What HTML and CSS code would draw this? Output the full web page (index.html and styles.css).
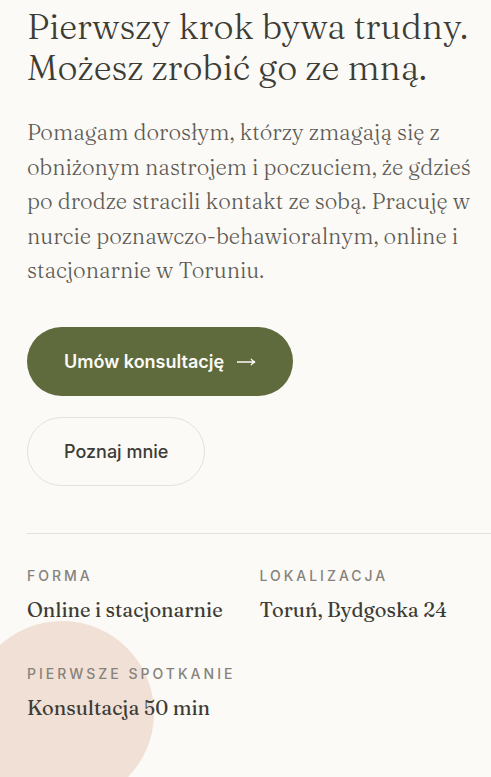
FILE: index.html
```html
<!DOCTYPE html>
<html lang="pl">
<head>
  <meta charset="UTF-8">
  <meta name="viewport" content="width=device-width, initial-scale=1.0">
  <title>Pierwszy krok</title>
  <link rel="stylesheet" href="styles.css">
</head>
<body>
  <main class="hero">
    <h1>Pierwszy krok bywa trudny. Możesz zrobić go ze mną.</h1>
    <p class="lead">Pomagam dorosłym, którzy zmagają się z obniżonym nastrojem i poczuciem, że gdzieś po drodze stracili kontakt ze sobą. Pracuję w nurcie poznawczo-behawioralnym, online i stacjonarnie w Toruniu.</p>
    <div class="actions">
      <a class="btn btn-primary" href="#kontakt">Umów konsultację
        <svg class="arrow" viewBox="0 0 20 12" aria-hidden="true"><path d="M1 7H19M15 3.800C15.800 5.300 17 6.500 19 7C17 7.500 15.800 8.700 15 10.200"/></svg>
      </a>
      <a class="btn btn-outline" href="#o-mnie">Poznaj mnie</a>
    </div>
    <dl class="facts">
      <div class="fact">
        <dt>Forma</dt>
        <dd>Online i stacjonarnie</dd>
      </div>
      <div class="fact">
        <dt>Lokalizacja</dt>
        <dd>Toruń, Bydgoska 24</dd>
      </div>
      <div class="fact">
        <dt>Pierwsze spotkanie</dt>
        <dd>Konsultacja 50 min</dd>
      </div>
    </dl>
  </main>
</body>
</html>
```
FILE: styles.css
```css
:root {
  --bg: #fbfaf7;
  --ink: #3d3c35;
  --muted: #5e5c56;
  --label: #85827b;
  --line: #e2e2dc;
  --olive: #5f6b3c;
  --peach: #f1e0d5;
  --serif: Fraunces, "Liberation Serif", serif;
  --sans: Inter, sans-serif;
}

* {
  box-sizing: border-box;
}

body {
  margin: 0;
  min-height: 100vh;
  background: var(--bg);
  color: var(--ink);
  font-family: var(--sans);
  overflow-x: hidden;
}

.hero {
  position: relative;
  min-height: 100vh;
  padding: 6px 0 48px 27px;
  overflow: hidden;
}

/* soft circle behind the facts */
.hero::before {
  content: "";
  position: absolute;
  left: -30px;
  bottom: -28px;
  width: 184px;
  height: 184px;
  border-radius: 50%;
  background: var(--peach);
  z-index: -1;
}

h1 {
  margin: 0;
  max-width: 460px;
  font-family: var(--serif);
  font-size: 35px;
  font-weight: 300;
  line-height: 41px;
}

.lead {
  margin: 27px 0 0;
  max-width: 450px;
  color: var(--muted);
  font-family: var(--serif);
  font-size: 22px;
  font-weight: 300;
  line-height: 1.57;
}

.actions {
  display: flex;
  flex-direction: column;
  align-items: flex-start;
  gap: 21px;
  margin-top: 39px;
}

.btn {
  display: inline-flex;
  align-items: center;
  gap: 12px;
  padding: 22px 36px;
  border: 1px solid transparent;
  border-radius: 40px;
  font-size: 18px;
  line-height: 23px;
  text-decoration: none;
}

.btn-primary {
  background: var(--olive);
  color: var(--bg);
  font-weight: 600;
}

.btn-outline {
  border-color: var(--line);
  color: var(--ink);
  font-weight: 500;
}

.arrow {
  width: 20px;
  height: 12px;
  fill: none;
  stroke: currentColor;
  stroke-width: 1.3;
}

.facts {
  display: grid;
  grid-template-columns: auto 1fr;
  gap: 40px 24px;
  margin: 47px 0 0;
  padding-top: 33px;
  border-top: 1px solid var(--line);
}

dt {
  color: var(--label);
  font-size: 14px;
  font-weight: 500;
  letter-spacing: 3px;
  line-height: 18px;
  text-transform: uppercase;
}

dd {
  margin: 10px 0 0;
  font-family: var(--serif);
  font-size: 20px;
  line-height: 30px;
}
```
